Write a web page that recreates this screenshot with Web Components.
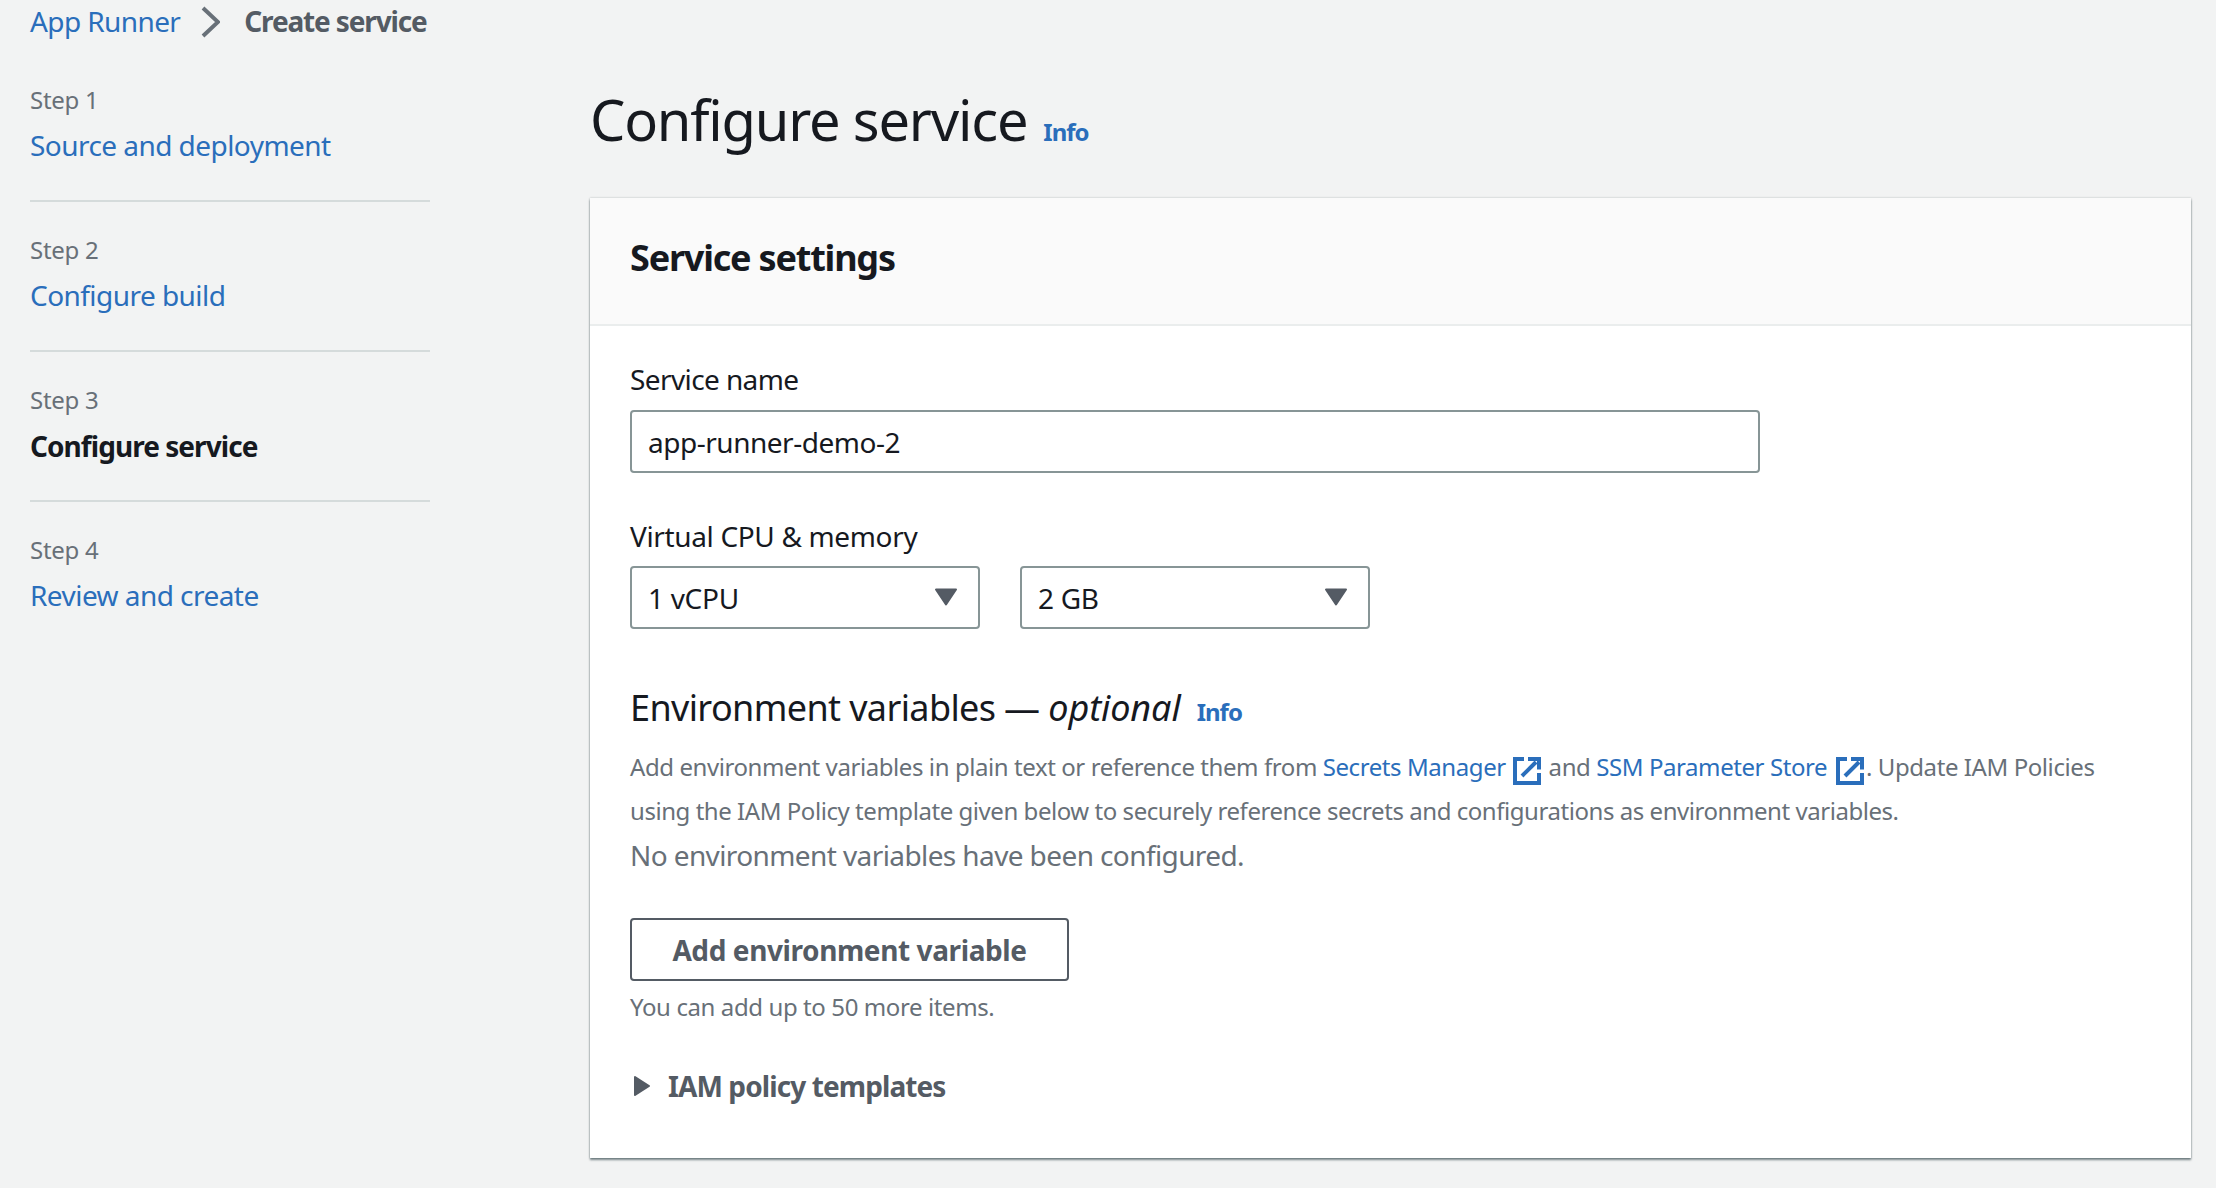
<!DOCTYPE html>
<html>
<head>
<meta charset="utf-8">
<title>Configure service</title>
<style>
  html, body { margin: 0; height: 1188px; overflow: hidden; background: #f2f3f3; }
  body { font-family: "Noto Sans", "Open Sans", sans-serif; color: #16191f; }
</style>
</head>
<body>
<wizard-page>
  <bread-crumbs slot="crumbs"></bread-crumbs>
  <wizard-nav slot="nav"></wizard-nav>
  <page-title slot="title">Configure service</page-title>
  <settings-card slot="main" heading="Service settings">
    <field-label>Service name</field-label>
    <text-box>app-runner-demo-2</text-box>
    <field-label class="second">Virtual CPU &amp; memory</field-label>
    <select-row></select-row>
    <env-section></env-section>
  </settings-card>
</wizard-page>

<script>
const FONT = '"Noto Sans", "Open Sans", sans-serif';

class WizardPage extends HTMLElement {
  constructor() {
    super();
    this.attachShadow({ mode: "open" });
    this.shadowRoot.innerHTML = `
      <style>
        :host { display: grid; grid-template-columns: 590px 1601px; grid-template-rows: 45px auto; width: 2216px; font-family: ${FONT}; }
        .crumbs { grid-column: 1 / 3; padding-left: 30px; }
        .nav { padding: 0 0 0 30px; }
        .main { display: flex; flex-direction: column; }
      </style>
      <div class="crumbs"><slot name="crumbs"></slot></div>
      <div class="nav"><slot name="nav"></slot></div>
      <div class="main"><slot name="title"></slot><slot name="main"></slot></div>
    `;
  }
}

class BreadCrumbs extends HTMLElement {
  constructor() {
    super();
    this.attachShadow({ mode: "open" });
    this.shadowRoot.innerHTML = `
      <style>
        :host { display: flex; align-items: center; height: 41px; font-size: 28px; }
        a { color: #2a6ebb; letter-spacing: -0.6px; }
        b { color: #545b64; font-weight: 700; letter-spacing: -1.15px; }
        svg { margin: 3px 24px 0 20px; }
      </style>
      <a>App Runner</a>
      <svg width="20" height="32" viewBox="0 0 20 32"><path d="M3 2 L18 16 L3 30" fill="none" stroke="#687078" stroke-width="4"/></svg>
      <b>Create service</b>
    `;
  }
}

class WizardStep extends HTMLElement {
  constructor() {
    super();
    this.attachShadow({ mode: "open" });
    const current = this.hasAttribute("current");
    this.shadowRoot.innerHTML = `
      <style>
        :host { display: block; width: 400px; height: 150px; box-sizing: border-box; padding-top: 29px; border-bottom: 2px solid #d5dbdb; }
        :host(:last-child) { border-bottom: none; }
        .step { color: #687078; font-size: 24px; line-height: 38px; letter-spacing: -0.3px; }
        .name { color: #2a6ebb; font-size: 28px; line-height: 44px; margin-top: 4px; letter-spacing: -0.55px; }
        .name.current { color: #16191f; font-weight: 700; letter-spacing: -0.95px; margin-top: 5px; }
      </style>
      <div class="step">${this.getAttribute("step")}</div>
      <div class="name ${current ? "current" : ""}"><slot></slot></div>
    `;
  }
}

class WizardNav extends HTMLElement {
  constructor() {
    super();
    this.attachShadow({ mode: "open" });
    this.shadowRoot.innerHTML = `
      <style>
        :host { display: block; width: 400px; margin-top: 7px; }
      </style>
      <wizard-step step="Step 1">Source and deployment</wizard-step>
      <wizard-step step="Step 2">Configure build</wizard-step>
      <wizard-step step="Step 3" current>Configure service</wizard-step>
      <wizard-step step="Step 4">Review and create</wizard-step>
    `;
  }
}

class InfoLink extends HTMLElement {
  constructor() {
    super();
    this.attachShadow({ mode: "open" });
    this.shadowRoot.innerHTML = `
      <style>
        :host { display: inline-block; color: #2a6ebb; font-size: 24px; font-weight: 700; font-style: normal; letter-spacing: -1px; }
      </style>
      <slot>Info</slot>
    `;
  }
}

class PageTitle extends HTMLElement {
  constructor() {
    super();
    this.attachShadow({ mode: "open" });
    this.shadowRoot.innerHTML = `
      <style>
        :host { display: flex; align-items: baseline; gap: 16px; height: 153px; box-sizing: border-box; padding-top: 36px; }
        h1 { margin: 0; font-size: 56px; line-height: 76px; font-weight: 400; color: #16191f; letter-spacing: -1.2px; }
      </style>
      <h1><slot></slot></h1>
      <info-link></info-link>
    `;
  }
}

class SettingsCard extends HTMLElement {
  constructor() {
    super();
    this.attachShadow({ mode: "open" });
    this.shadowRoot.innerHTML = `
      <style>
        :host { display: block; width: 1601px; height: 960px; background: #fff; box-shadow: 0 2px 2px rgba(0,28,36,.5), 0 0 2px rgba(0,28,36,.25); box-sizing: border-box; }
        header { height: 128px; box-sizing: border-box; background: #fafafa; border-bottom: 2px solid #eaeded; padding: 0 40px 8px; display: flex; align-items: center; }
        h2 { margin: 0; font-size: 36px; font-weight: 700; color: #16191f; letter-spacing: -1.2px; }
        .body { padding: 31px 40px 0; }
      </style>
      <header><h2>${this.getAttribute("heading")}</h2></header>
      <div class="body"><slot></slot></div>
    `;
  }
}

class FieldLabel extends HTMLElement {
  constructor() {
    super();
    this.attachShadow({ mode: "open" });
    this.shadowRoot.innerHTML = `
      <style>
        :host { display: block; font-size: 28px; line-height: 44px; color: #16191f; letter-spacing: -0.6px; margin-bottom: 9px; }
        :host(.second) { margin-top: 41px; margin-bottom: 8px; letter-spacing: -0.35px; }
      </style>
      <slot></slot>
    `;
  }
}

class TextBox extends HTMLElement {
  constructor() {
    super();
    this.attachShadow({ mode: "open" });
    this.shadowRoot.innerHTML = `
      <style>
        :host { display: flex; align-items: center; width: 1130px; height: 63px; box-sizing: border-box; border: 2px solid #879596; border-radius: 4px; padding: 0 16px; background: #fff; font-size: 28px; color: #16191f; letter-spacing: -0.48px; }
      </style>
      <slot></slot>
    `;
  }
}

class SelectBox extends HTMLElement {
  constructor() {
    super();
    this.attachShadow({ mode: "open" });
    this.shadowRoot.innerHTML = `
      <style>
        :host { display: flex; align-items: center; justify-content: space-between; width: 350px; height: 63px; box-sizing: border-box; border: 2px solid #879596; border-radius: 4px; padding: 0 20px 0 16px; background: #fff; font-size: 28px; color: #16191f; letter-spacing: -0.3px; }
        svg { display: block; margin-top: -1px; }
      </style>
      <span><slot></slot></span>
      <svg width="24" height="18" viewBox="0 0 24 18"><path d="M2 1.5 H22 L12 16.5 Z" fill="#545b64" stroke="#545b64" stroke-width="2" stroke-linejoin="round"/></svg>
    `;
  }
}

class SelectRow extends HTMLElement {
  constructor() {
    super();
    this.attachShadow({ mode: "open" });
    this.shadowRoot.innerHTML = `
      <style>
        :host { display: flex; gap: 40px; }
      </style>
      <select-box>1 vCPU</select-box>
      <select-box>2 GB</select-box>
    `;
  }
}

class ExtLink extends HTMLElement {
  constructor() {
    super();
    this.attachShadow({ mode: "open" });
    this.shadowRoot.innerHTML = `
      <style>
        :host { display: inline; color: #2a6ebb; }
        svg { vertical-align: -9px; margin-left: 7px; }
        :host(.wide) svg { margin-left: 9px; }
      </style>
      <slot></slot><svg width="28" height="28" viewBox="0 0 28 28" fill="none" stroke="#2a6ebb" stroke-width="4"><path d="M11 2 H2 V26 H26 V16"/><path d="M9 19 L23 5"/><path d="M15 2 H26 V12.5"/></svg>
    `;
  }
}

class EnvSection extends HTMLElement {
  constructor() {
    super();
    this.attachShadow({ mode: "open" });
    this.shadowRoot.innerHTML = `
      <style>
        :host { display: block; margin-top: 55px; }
        h3 { margin: 0; display: flex; align-items: baseline; gap: 16px; font-size: 36px; line-height: 48px; font-weight: 400; color: #16191f; letter-spacing: -0.62px; }
        h3 em { letter-spacing: -0.1px; }
        p { margin: 0; color: #687078; }
        .desc { margin-top: 9px; font-size: 24px; line-height: 44px; letter-spacing: -0.42px; width: 1500px; }
        .and { margin-left: 2px; }
        .tail { margin-left: -4px; }
        .line2 { letter-spacing: -0.45px; }
        .none { font-size: 28px; line-height: 44px; letter-spacing: -0.6px; margin-top: 0; }
        button { display: block; margin-top: 41px; width: 439px; height: 63px; background: #fff; border: 2px solid #545b64; border-radius: 4px; font: 700 28px ${FONT}; color: #545b64; padding: 0; letter-spacing: -0.4px; }
        .hint { font-size: 24px; line-height: 36px; letter-spacing: -0.4px; margin-top: 8px; }
        .expand { display: flex; align-items: center; margin-top: 39px; color: #545b64; font-size: 28px; font-weight: 700; letter-spacing: -0.9px; line-height: 44px; }
        .expand svg { margin: 0 17px 0 3px; }
      </style>
      <h3><span>Environment variables — <em>optional</em></span><info-link></info-link></h3>
      <p class="desc"><span>Add environment variables in plain text or reference them from </span><ext-link>Secrets Manager</ext-link><span class="and"> and </span><ext-link class="wide">SSM Parameter Store</ext-link><span class="tail">. Update IAM Policies</span><br><span class="line2">using the IAM Policy template given below to securely reference secrets and configurations as environment variables.</span></p>
      <p class="none">No environment variables have been configured.</p>
      <button>Add environment variable</button>
      <p class="hint">You can add up to 50 more items.</p>
      <div class="expand">
        <svg width="18" height="22" viewBox="0 0 18 22"><path d="M2 2 L16 11 L2 20 Z" fill="#545b64" stroke="#545b64" stroke-width="2" stroke-linejoin="round"/></svg>
        <span>IAM policy templates</span>
      </div>
    `;
  }
}

customElements.define("info-link", InfoLink);
customElements.define("bread-crumbs", BreadCrumbs);
customElements.define("wizard-step", WizardStep);
customElements.define("wizard-nav", WizardNav);
customElements.define("page-title", PageTitle);
customElements.define("field-label", FieldLabel);
customElements.define("text-box", TextBox);
customElements.define("select-box", SelectBox);
customElements.define("select-row", SelectRow);
customElements.define("ext-link", ExtLink);
customElements.define("env-section", EnvSection);
customElements.define("settings-card", SettingsCard);
customElements.define("wizard-page", WizardPage);
</script>
</body>
</html>
